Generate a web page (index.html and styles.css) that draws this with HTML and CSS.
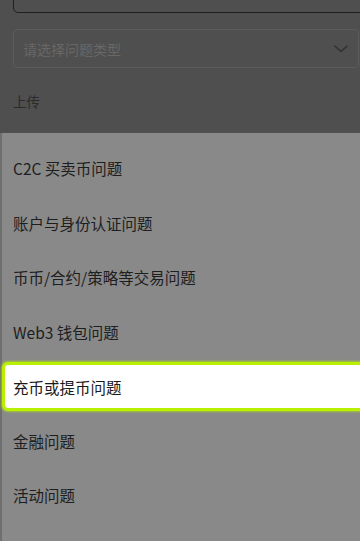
FILE: index.html
```html
<!DOCTYPE html>
<html lang="zh">
<head>
<meta charset="utf-8">
<link rel="stylesheet" href="styles.css">
</head>
<body>
<div class="page">
  <div class="form">
    <div class="textbox"></div>
    <div class="select">
      <span class="placeholder">请选择问题类型</span>
      <svg class="chev" width="14" height="8" viewBox="0 0 14 8"><path d="M1 1.2 L7 6.5 L13 1.2" fill="none" stroke="#333" stroke-width="1.6" stroke-linecap="round" stroke-linejoin="round"/></svg>
    </div>
    <div class="label">上传</div>
  </div>
  <div class="sheet">
    <div class="item"><span>C2C 买卖币问题</span></div>
    <div class="item"><span>账户与身份认证问题</span></div>
    <div class="item"><span>币币/合约/策略等交易问题</span></div>
    <div class="item"><span>Web3 钱包问题</span></div>
    <div class="item active"><span>充币或提币问题</span></div>
    <div class="item"><span>金融问题</span></div>
    <div class="item"><span>活动问题</span></div>
  </div>
</div>
</body>
</html>
```
FILE: styles.css
```css
* { box-sizing: border-box; }
html, body { margin: 0; padding: 0; }
body {
  width: 360px;
  height: 541px;
  overflow: hidden;
  background: #4f4f4f;
  font-family: "Noto Sans CJK SC", "Noto Sans", sans-serif;
}
.page { display: flex; flex-direction: column; height: 541px; }
.form {
  height: 133px;
  padding-left: 13px;
  display: flex;
  flex-direction: column;
}
.textbox {
  height: 25px;
  margin-top: -12px;
  margin-right: -10px;
  border: 1.5px solid #1f1f1f;
  border-radius: 5px;
}
.select {
  margin-top: 16px;
  height: 39px;
  margin-right: 1px;
  border: 1px solid #5b5b5b;
  border-radius: 4px;
  display: flex;
  align-items: center;
  justify-content: space-between;
  padding: 0 10px 0 9px;
}
.placeholder { font-size: 14px; color: #676767; }
.chev { display: block; }
.label {
  margin-top: 23px;
  font-size: 13.5px;
  color: #2b2b2b;
}
.sheet {
  flex: 1;
  background: #898989;
  border-left: 2px solid #6f6f6f;
  padding-top: 7.75px;
  display: flex;
  flex-direction: column;
}
.item {
  height: 54.5px;
  display: flex;
  align-items: center;
  padding-left: 11px;
  font-size: 15.5px;
  color: #1e1e1e;
}
.item.active {
  margin: 3px -6px 2px 0;
  height: 49.5px;
  background: #fff;
  border: 3px solid #b8f000;
  box-shadow: 0 0 2px 1px rgba(184, 240, 0, 0.6);
  border-radius: 6px;
  padding-left: 8px;
  color: #1a1a1a;
}
```
